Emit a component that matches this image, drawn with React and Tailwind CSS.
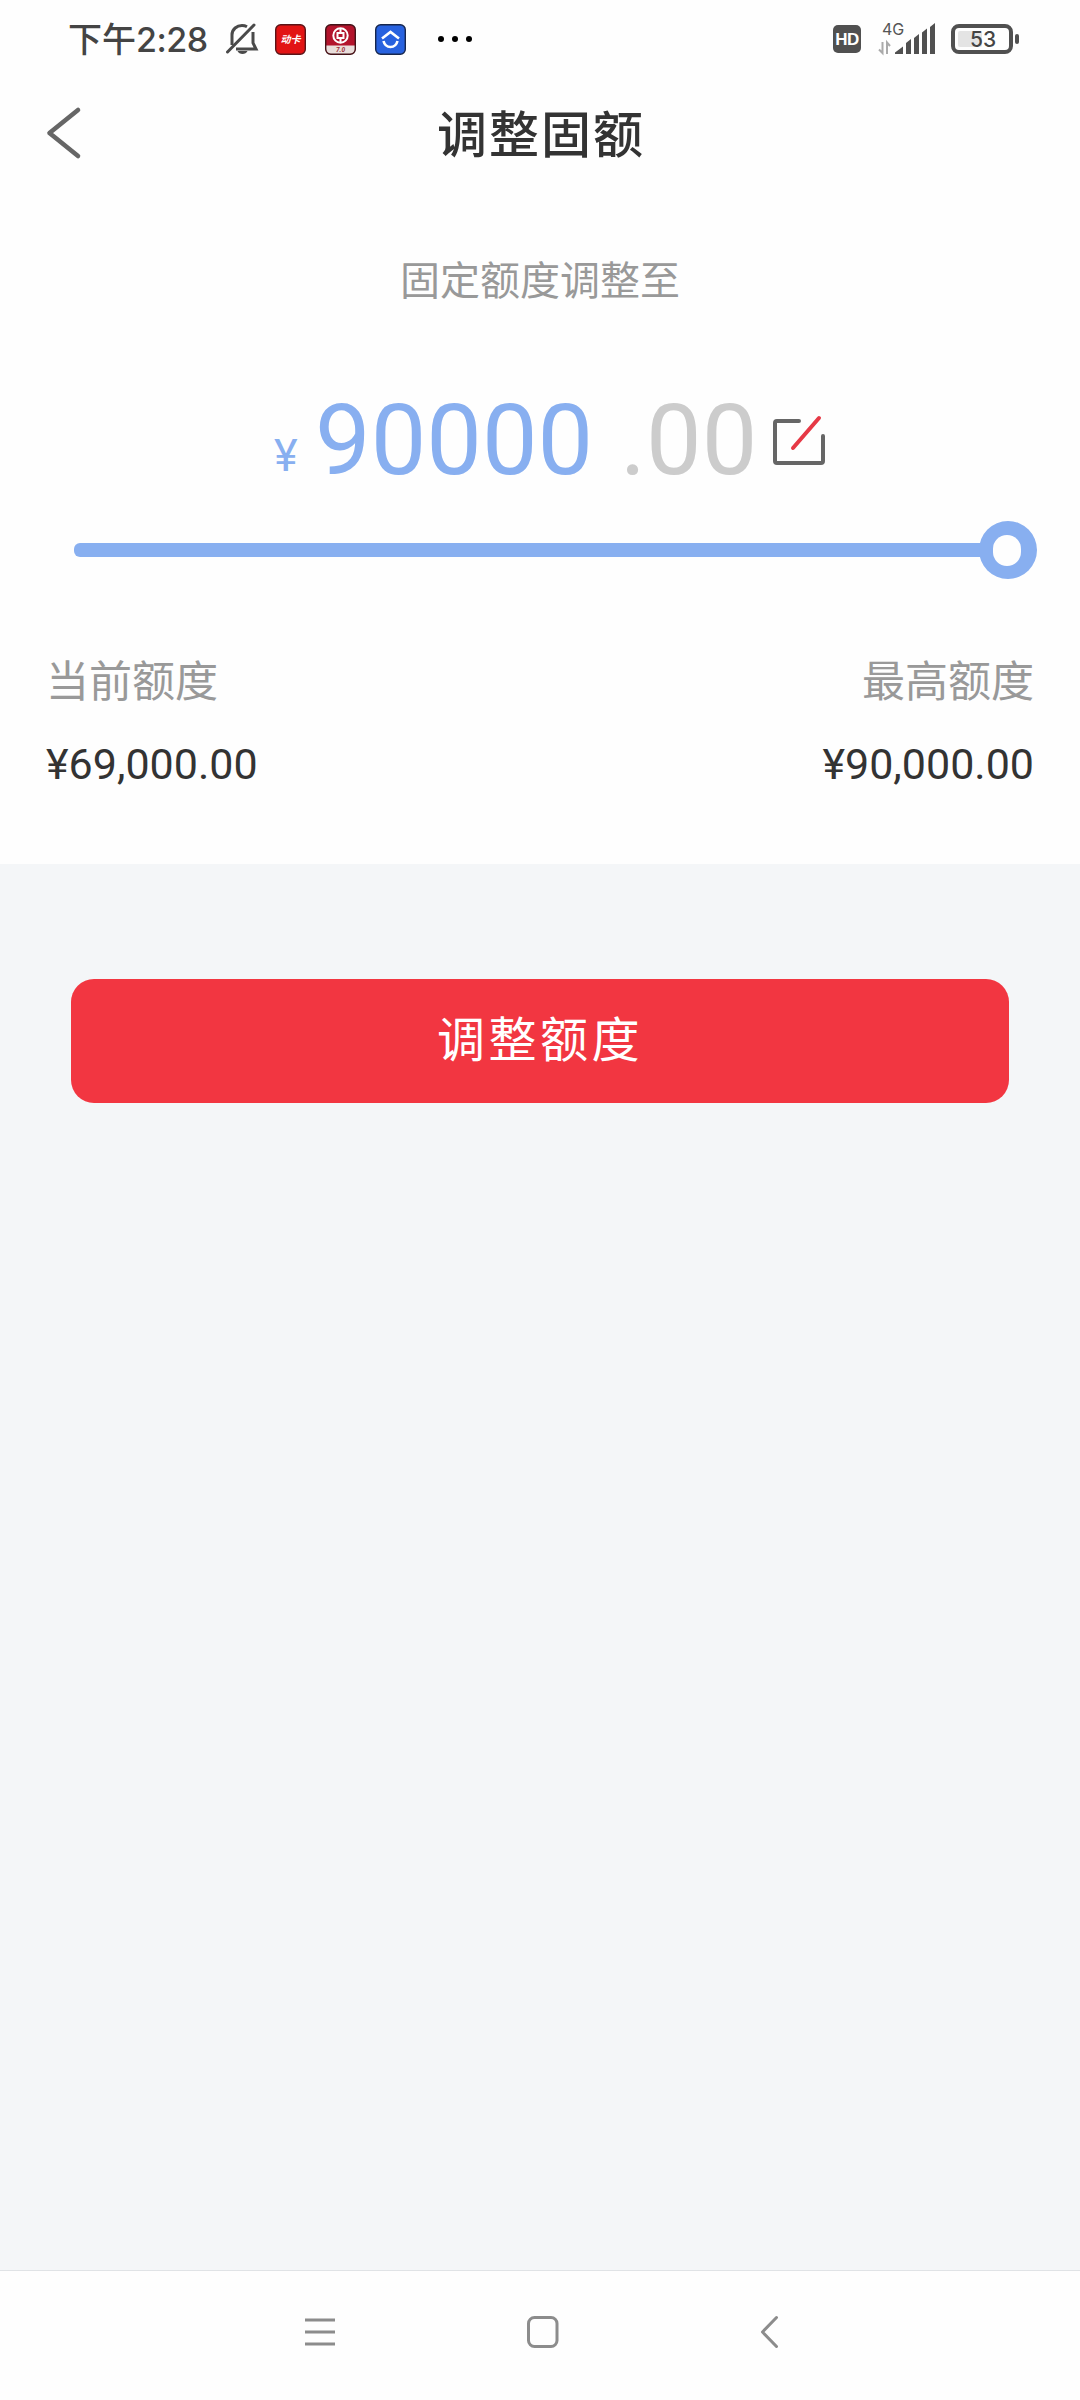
const CJK = "font-['Roboto','Noto_Sans_CJK_SC',sans-serif]";

function StatusBar() {
  return (
    <div className="flex h-[78px] items-center justify-between pl-[68px] pr-[61px]">
      <div className="flex items-center">
        <span className="w-[139px] whitespace-nowrap font-['Noto_Sans_CJK_SC',sans-serif] text-[34px] font-medium leading-[40px] text-[#444]">
          下午<span className="font-['Inter','Noto_Sans_CJK_SC',sans-serif] text-[34px] tracking-[-0.5px]">2:28</span>
        </span>
        <svg className="ml-[18px] h-[34px] w-[34px]" viewBox="0 0 34 34" fill="none" stroke="#4a4a4a" strokeWidth="3">
          <path d="M7 23V13C7 7 12 3.500 17 3.500c2 0 3.500 .4 5 1.200M28 10v11l3 6H11" />
          <path d="M2.500 30 29 3" strokeLinecap="round" />
          <path d="M12.500 29c1.500 4 8.500 4 10 0z" fill="#4a4a4a" stroke="none" />
        </svg>
        <svg className="ml-4 h-[31px] w-[31px]" viewBox="0 0 31 31">
          <rect x=".7" y=".7" width="29.600" height="29.600" rx="5" fill="#e21414" stroke="#5b1417" strokeWidth="1.400" />
          <text x="15.500" y="19" textAnchor="middle" fontSize="10" fontWeight="700" fontStyle="italic" fill="#fff" fontFamily="Noto Sans CJK SC">动卡</text>
        </svg>
        <svg className="ml-[19px] h-[31px] w-[31px]" viewBox="0 0 31 31">
          <rect x=".7" y=".7" width="29.600" height="29.600" rx="5" fill="#b3142c" />
          <path d="M1 21.500h29V25a5 5 0 0 1-5 5H6a5 5 0 0 1-5-5z" fill="#e9dedb" />
          <rect x=".7" y=".7" width="29.600" height="29.600" rx="5" fill="none" stroke="#431318" strokeWidth="1.400" />
          <g fill="none" stroke="#fff" strokeWidth="2">
            <circle cx="15.500" cy="11.500" r="7.200" />
            <rect x="12.500" y="9" width="6" height="5" />
            <path d="M15.500 4v5m0 5v5" />
          </g>
          <text x="15.500" y="28" textAnchor="middle" fontSize="6.500" fontWeight="700" fontStyle="italic" fill="#9c3038" fontFamily="Roboto">7.0</text>
        </svg>
        <svg className="ml-[19px] h-[31px] w-[31px]" viewBox="0 0 31 31">
          <rect x=".7" y=".7" width="29.600" height="29.600" rx="5" fill="#2862df" stroke="#16264d" strokeWidth="1.400" />
          <path d="M7 14.500 15.500 8l8.500 6.500M8.500 17c2 8 12 8 14 0" fill="none" stroke="#fff" strokeWidth="2.600" />
        </svg>
        <div className="ml-8 flex gap-2">
          <i className="size-[6px] rounded-full bg-black" />
          <i className="size-[6px] rounded-full bg-black" />
          <i className="size-[6px] rounded-full bg-black" />
        </div>
      </div>
      <div className="flex items-center">
        <div className="flex size-[28px] items-center justify-center rounded-[5px] bg-[#505050] pt-[2px] font-['Liberation_Sans',sans-serif] text-[17px] font-bold tracking-[-0.5px] text-white">HD</div>
        <svg className="ml-[17px] h-[38px] w-[58px]" viewBox="0 0 58 38">
          <text x="4" y="14.500" fontSize="16" fill="#555" fontFamily="Inter">4G</text>
          <path d="M4.500 22v11L1 29.500M9 34V22.500l3 3.500" fill="none" stroke="#aaa" strokeWidth="2" />
          <path d="M17 34v-1.500l8-6V34zM28 23l5-4V34H28zM36 18l5-4V34H36zM44 12.500l5-4V34H44zM52 7l5-4V34H52z" fill="#505050" />
        </svg>
        <div className="ml-[15px] flex h-[30px] w-[62px] items-center rounded-[8px] border-4 border-[#505050] pl-[3px]">
          <div className="flex h-4 w-[24px] items-center rounded-[2px] bg-[#e4e4e4] pl-[12px] pt-[2px] font-['Inter',sans-serif] text-[21px] font-medium text-[#444]">53</div>
        </div>
        <i className="ml-[2px] h-[10px] w-1 rounded-[2px] bg-[#505050]" />
      </div>
    </div>
  );
}

function Header() {
  return (
    <header className="grid h-[110px] grid-cols-[200px_1fr_200px] items-center">
      <svg className="ml-[45px] h-[54px] w-[38px]" viewBox="0 0 38 54" fill="none" stroke="#666" strokeWidth="4.600" strokeLinecap="round" strokeLinejoin="round">
        <path d="M33 4 4.500 27 33 50" />
      </svg>
      <h1 className="pl-[2px] pt-[5px] text-center text-[50px] font-medium leading-[60px] tracking-[2px] text-[#333]">调整固额</h1>
    </header>
  );
}

function Limit({ label, value, className }) {
  return (
    <div className={className}>
      <div className="text-[43px] leading-[60px] text-[#999]">{label}</div>
      <div className="mt-[22px] text-[43px] leading-[60px] text-[#333]">{value}</div>
    </div>
  );
}

export default function App() {
  return (
    <div className={`flex h-[2400px] w-[1080px] flex-col bg-[#f4f6f8] ${CJK}`}>
      <section className="h-[864px] bg-[#fefefe]">
        <StatusBar />
        <Header />
        <p className="mt-[64px] text-center text-[40px] leading-[60px] text-[#999]">固定额度调整至</p>
        <div className="mt-[70px] flex h-[116px] items-baseline pl-[274px] leading-[116px]">
          <span className="w-[42px] -translate-y-[3px] text-[45px] text-[#88aff0]">¥</span>
          <span className="w-[304px] -translate-x-px text-[99px] text-[#88aff0]">90000</span>
          <span className="w-[151px] text-[99px] text-[#ccc]">.00</span>
          <svg className="h-[52px] w-[56px] translate-y-px self-center" viewBox="0 0 56 52" fill="none" strokeLinecap="round" strokeWidth="4">
            <path d="M28 6H6a2 2 0 0 0-2 2v38a2 2 0 0 0 2 2h44a2 2 0 0 0 2-2V21" stroke="#666" />
            <path d="M22 33 48 3" stroke="#e63946" />
          </svg>
        </div>
        <div className="mt-[23px] flex h-[58px] items-center pl-[74px]">
          <div className="h-[14px] w-[906px] rounded-l-[6px] bg-[#88aff0]" />
          <div className="-ml-px flex size-[58px] items-center justify-center rounded-full bg-[#88aff0]">
            <div className="mr-[2px] h-[31px] w-[28px] rounded-full bg-[#fefefe]" />
          </div>
        </div>
        <div className="mt-[73px] flex justify-between pl-[46px] pr-[46px]">
          <Limit label="当前额度" value="¥69,000.00" />
          <Limit label="最高额度" value="¥90,000.00" className="text-right" />
        </div>
      </section>
      <main className="flex-1 px-[71px] pt-[115px]">
        <button className="flex h-[124px] w-[938px] items-center justify-center rounded-[23px] bg-[#f23641] text-[48px] leading-[60px] tracking-[3.500px] text-white">调整额度</button>
      </main>
      <nav className="flex h-[130px] items-start border-t border-[#e0e3e6] bg-[#fefefe] pl-[304px] pt-[44px]">
        <svg className="h-[34px] w-[32px]" viewBox="0 0 32 34" stroke="#8c8c8c" strokeWidth="3">
          <path d="M1 5h30M1 17h30M1 29h30" />
        </svg>
        <svg className="ml-[189px] h-[34px] w-[34px]" viewBox="0 0 34 34" fill="none" stroke="#8c8c8c" strokeWidth="3">
          <rect x="3.500" y="2.500" width="28.500" height="29" rx="6" />
        </svg>
        <svg className="ml-[200px] h-[34px] w-[22px]" viewBox="0 0 22 34" fill="none" stroke="#8c8c8c" strokeWidth="3" strokeLinecap="round" strokeLinejoin="round">
          <path d="M17.500 2.500 3.500 17l14 14.500" />
        </svg>
      </nav>
    </div>
  );
}
